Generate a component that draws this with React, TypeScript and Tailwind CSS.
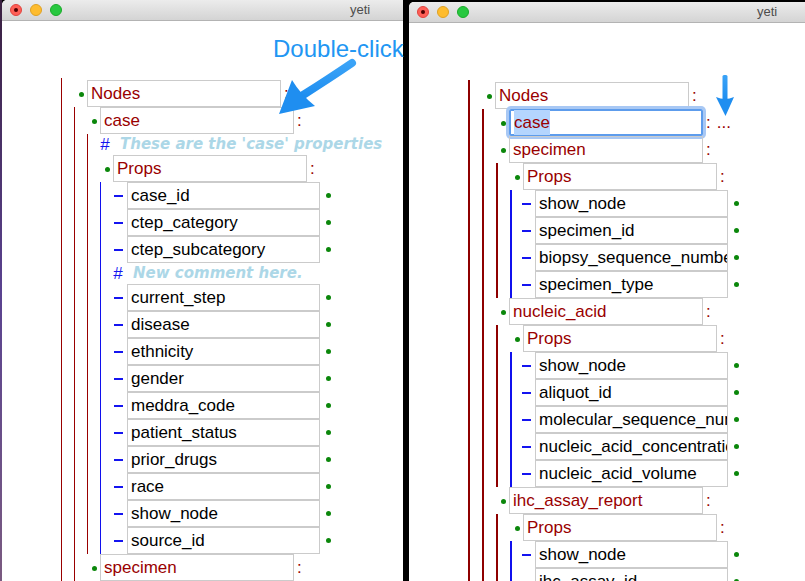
import React from 'react';

type TreeItem =
  | { type: 'key'; label: string; focused?: boolean; more?: boolean; children?: TreeItem[] }
  | { type: 'value'; label: string }
  | { type: 'comment'; text: string };

const k = (label: string, children?: TreeItem[], extra: { focused?: boolean; more?: boolean } = {}): TreeItem => ({
  type: 'key',
  label,
  children,
  ...extra,
});
const v = (labels: string[]): TreeItem[] => labels.map(label => ({ type: 'value', label }));
const c = (text: string): TreeItem => ({ type: 'comment', text });

const leftTree: TreeItem[] = [
  k('Nodes', [
    k('case', [
      c("These are the 'case' properties"),
      k('Props', [
        ...v(['case_id', 'ctep_category', 'ctep_subcategory']),
        c('New comment here.'),
        ...v([
          'current_step',
          'disease',
          'ethnicity',
          'gender',
          'meddra_code',
          'patient_status',
          'prior_drugs',
          'race',
          'show_node',
          'source_id',
        ]),
      ]),
    ]),
    k('specimen'),
  ]),
];

const rightTree: TreeItem[] = [
  k('Nodes', [
    k('case', undefined, { focused: true, more: true }),
    k('specimen', [k('Props', v(['show_node', 'specimen_id', 'biopsy_sequence_number', 'specimen_type']))]),
    k('nucleic_acid', [
      k('Props', v(['show_node', 'aliquot_id', 'molecular_sequence_number', 'nucleic_acid_concentration', 'nucleic_acid_volume'])),
    ]),
    k('ihc_assay_report', [k('Props', v(['show_node', 'ihc_assay_id']))]),
  ]),
];

const Dot = ({ className = '' }: { className?: string }) => (
  <span className={`h-[5px] w-[5px] shrink-0 rounded-full bg-[#0b870b] ${className}`} />
);

const KeyRow = ({ item }: { item: Extract<TreeItem, { type: 'key' }> }) => (
  <div className="flex h-[27px] items-center pl-[17px]">
    <Dot className="translate-y-[1px]" />
    <div
      className={`ml-[3px] flex h-[27px] w-[194px] shrink-0 items-center pl-[3px] text-[#990000] ${
        item.focused
          ? 'rounded-[2px] border-2 border-[#5d9cec] ring-[3px] ring-[#a8c8f4]'
          : 'border border-[#cbcbcb]'
      }`}
    >
      {item.focused ? <span className="bg-[#b4d5fe]">{item.label}</span> : item.label}
    </div>
    <span className="ml-[3px] text-[#990000]">:</span>
    {item.more && <span className="ml-[6px] text-[#990000]">...</span>}
  </div>
);

const ValueRow = ({ label, thick }: { label: string; thick?: boolean }) => (
  <div className={`flex h-[27px] items-center ${thick ? 'pl-[10px]' : 'pl-[13px]'}`}>
    <span className="h-[2px] w-[9px] shrink-0 bg-[#1414f0]" />
    <div className="ml-[4px] flex h-[27px] w-[193px] shrink-0 items-center overflow-hidden whitespace-nowrap border border-[#cbcbcb] pl-[3px] text-black">
      {label}
    </div>
    <Dot className="ml-[6px]" />
  </div>
);

const CommentRow = ({ text }: { text: string }) => (
  <div className="flex h-[21px] items-center pl-[12px] italic">
    <span className="w-[20px] shrink-0 text-[#1414f0]">#</span>
    <span className="whitespace-nowrap font-['DejaVu_Sans',sans-serif] text-[15px] font-bold text-[#acd7e7]">{text}</span>
  </div>
);

function Branch({ items, thick, root }: { items: TreeItem[]; thick?: boolean; root?: boolean }) {
  const isValues = items.some(i => i.type === 'value');
  const line = isValues ? 'border-[#1010ee]' : thick ? 'border-[#8e0000]' : 'border-[#990000]';
  return (
    <div className={`${thick ? 'border-l-2' : 'border-l'} ${line} ${root ? 'pt-[2px]' : ''}`}>
      {items.map((item, i) => {
        if (item.type === 'value') return <ValueRow key={i} label={item.label} thick={thick} />;
        if (item.type === 'comment') return <CommentRow key={i} text={item.text} />;
        return (
          <div key={i}>
            <KeyRow item={item} />
            {item.children && (
              <div className="ml-[12px]">
                <Branch items={item.children} thick={thick} />
              </div>
            )}
          </div>
        );
      })}
    </div>
  );
}

function Window({ className, tree, thick }: { className: string; tree: TreeItem[]; thick?: boolean }) {
  return (
    <div className={`flex shrink-0 flex-col overflow-hidden bg-white ${className}`}>
      <div className="flex h-[21px] shrink-0 items-center border-b border-[#b3b3b3] bg-gradient-to-b from-[#ececec] to-[#d4d4d4]">
        <div className="flex gap-[8px] pl-[8px]">
          <span className="flex h-[12px] w-[12px] items-center justify-center rounded-full border border-[#e0443e] bg-[#fe5f57]">
            <span className="h-[4px] w-[4px] rounded-full bg-[#4d0000]" />
          </span>
          <span className="h-[12px] w-[12px] rounded-full border border-[#dea123] bg-[#febc2e]" />
          <span className="h-[12px] w-[12px] rounded-full border border-[#1aab29] bg-[#28c840]" />
        </div>
        <span className="ml-[288px] text-[13px] text-[#4d4d4d]">yeti</span>
      </div>
      <div className="ml-[59px] mt-[57px] text-[17px]">
        <Branch items={tree} thick={thick} root />
      </div>
    </div>
  );
}

export default function App() {
  return (
    <div className="relative flex h-[581px] w-[805px] overflow-hidden bg-black font-['Liberation_Sans',Arial,sans-serif]">
      <div className="w-[2px] shrink-0 bg-gradient-to-b from-[#3a2040] via-[#5a4290] to-[#7a5a80]" />
      <Window className="h-[581px] w-[401px] rounded-tl-[5px]" tree={leftTree} />
      <div className="w-[6px] shrink-0" />
      <Window className="mt-[2px] h-[579px] w-[396px] rounded-tl-[5px]" tree={rightTree} thick />

      <span className="absolute left-[273px] top-[37px] text-[24px] leading-none text-[#2196f3]">Double-click</span>
      <svg className="pointer-events-none absolute left-0 top-0" width="805" height="581" viewBox="0 0 805 581">
        <defs>
          <linearGradient id="arrowBlue" x1="0" y1="0" x2="0" y2="1">
            <stop offset="0" stopColor="#3aa3f7" />
            <stop offset="1" stopColor="#1f8ef0" />
          </linearGradient>
        </defs>
        <path d="M352 63 Q330 78 300 97" stroke="url(#arrowBlue)" strokeWidth="8" strokeLinecap="round" fill="none" />
        <path d="M279 114 L292 80 Q301 95 315 106 Z" fill="#1f8ef0" />
        <rect x="722.5" y="75" width="5" height="25" rx="1.5" fill="url(#arrowBlue)" />
        <path d="M716 97 Q725 101 734 97 L725.5 116 Z" fill="#1f8ef0" />
      </svg>
    </div>
  );
}
